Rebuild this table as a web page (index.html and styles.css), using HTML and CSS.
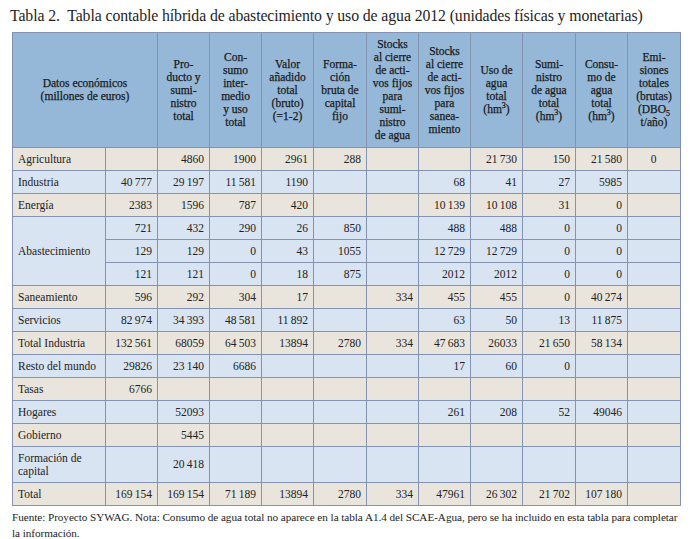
FILE: index.html
```html
<!DOCTYPE html>
<html lang="es">
<head>
<meta charset="utf-8">
<link rel="stylesheet" href="styles.css">
</head>
<body>
<div class="page">
<h1 class="title">Tabla 2.&nbsp; Tabla contable híbrida de abastecimiento y uso de agua 2012 (unidades físicas y monetarias)</h1>
<table class="tbl">
<colgroup>
<col class="c-lab"><col class="c52"><col class="c52"><col class="c52"><col class="c52"><col class="c53"><col class="c52"><col class="c52"><col class="c52"><col class="c53"><col class="c52"><col class="c53">
</colgroup>
<thead>
<tr class="head">
<th colspan="2">Datos económicos<br>(millones de euros)</th>
<th>Pro-<br>ducto y<br>sumi-<br>nistro<br>total</th>
<th>Con-<br>sumo<br>inter-<br>medio<br>y uso<br>total</th>
<th>Valor<br>añadido<br>total<br>(bruto)<br>(=1-2)</th>
<th>Forma-<br>ción<br>bruta de<br>capital<br>fijo</th>
<th>Stocks<br>al cierre<br>de acti-<br>vos fijos<br>para<br>sumi-<br>nistro<br>de agua</th>
<th>Stocks<br>al cierre<br>de acti-<br>vos fijos<br>para<br>sanea-<br>miento</th>
<th>Uso de<br>agua<br>total<br>(hm<sup>3</sup>)</th>
<th>Sumi-<br>nistro<br>de agua<br>total<br>(hm<sup>3</sup>)</th>
<th>Consu-<br>mo de<br>agua<br>total<br>(hm<sup>3</sup>)</th>
<th>Emi-<br>siones<br>totales<br>(brutas)<br>(DBO<sub>5</sub><br>t/año)</th>
</tr>
</thead>
<tbody>
<tr class="beige"><td class="lab">Agricultura</td><td></td><td>4860</td><td>1900</td><td>2961</td><td>288</td><td></td><td></td><td>21&#8201;730</td><td>150</td><td>21&#8201;580</td><td class="ctr">0</td></tr>
<tr class="blue"><td class="lab">Industria</td><td>40&#8201;777</td><td>29&#8201;197</td><td>11&#8201;581</td><td>1190</td><td></td><td></td><td>68</td><td>41</td><td>27</td><td>5985</td><td></td></tr>
<tr class="beige"><td class="lab">Energía</td><td>2383</td><td>1596</td><td>787</td><td>420</td><td></td><td></td><td>10&#8201;139</td><td>10&#8201;108</td><td>31</td><td>0</td><td></td></tr>
<tr class="blue"><td class="lab" rowspan="3">Abastecimiento</td><td>721</td><td>432</td><td>290</td><td>26</td><td>850</td><td></td><td>488</td><td>488</td><td>0</td><td>0</td><td></td></tr>
<tr class="blue"><td>129</td><td>129</td><td>0</td><td>43</td><td>1055</td><td></td><td>12&#8201;729</td><td>12&#8201;729</td><td>0</td><td>0</td><td></td></tr>
<tr class="blue"><td>121</td><td>121</td><td>0</td><td>18</td><td>875</td><td></td><td>2012</td><td>2012</td><td>0</td><td>0</td><td></td></tr>
<tr class="beige"><td class="lab">Saneamiento</td><td>596</td><td>292</td><td>304</td><td>17</td><td></td><td>334</td><td>455</td><td>455</td><td>0</td><td>40&#8201;274</td><td></td></tr>
<tr class="blue"><td class="lab">Servicios</td><td>82&#8201;974</td><td>34&#8201;393</td><td>48&#8201;581</td><td>11&#8201;892</td><td></td><td></td><td>63</td><td>50</td><td>13</td><td>11&#8201;875</td><td></td></tr>
<tr class="beige"><td class="lab">Total Industria</td><td>132&#8201;561</td><td>68059</td><td>64&#8201;503</td><td>13894</td><td>2780</td><td>334</td><td>47&#8201;683</td><td>26033</td><td>21&#8201;650</td><td>58&#8201;134</td><td></td></tr>
<tr class="blue"><td class="lab">Resto del mundo</td><td>29826</td><td>23&#8201;140</td><td>6686</td><td></td><td></td><td></td><td>17</td><td>60</td><td>0</td><td></td><td></td></tr>
<tr class="beige"><td class="lab">Tasas</td><td>6766</td><td></td><td></td><td></td><td></td><td></td><td></td><td></td><td></td><td></td><td></td></tr>
<tr class="blue"><td class="lab">Hogares</td><td></td><td>52093</td><td></td><td></td><td></td><td></td><td>261</td><td>208</td><td>52</td><td>49046</td><td></td></tr>
<tr class="beige"><td class="lab">Gobierno</td><td></td><td>5445</td><td></td><td></td><td></td><td></td><td></td><td></td><td></td><td></td><td></td></tr>
<tr class="blue tall"><td class="lab">Formación de capital</td><td></td><td>20&#8201;418</td><td></td><td></td><td></td><td></td><td></td><td></td><td></td><td></td><td></td></tr>
<tr class="beige"><td class="lab">Total</td><td>169&#8201;154</td><td>169&#8201;154</td><td>71&#8201;189</td><td>13894</td><td>2780</td><td>334</td><td>47961</td><td>26&#8201;302</td><td>21&#8201;702</td><td>107&#8201;180</td><td></td></tr>
</tbody>
</table>
<p class="note">Fuente: Proyecto SYWAG. Nota: Consumo de agua total no aparece en la tabla A1.4 del SCAE-Agua, pero se ha incluido en esta tabla para completar<br>la información.</p>
</div>
</body>
</html>
```

FILE: styles.css
```css
html, body {
  margin: 0;
  padding: 0;
  background: #ffffff;
}

.page {
  padding: 5px 0 0 0;
  font-family: "Liberation Serif", "DejaVu Serif", serif;
  color: #222222;
}

.title {
  margin: 0 0 0 10px;
  font-size: 15.8px;
  font-weight: normal;
  line-height: 21px;
  height: 27px;
  color: #1e1e1e;
  letter-spacing: -0.1px;
}

.tbl {
  margin-left: 12px;
  border-collapse: collapse;
  table-layout: fixed;
  width: 668px;
  font-size: 11.5px;
}

.c-lab { width: 93px; }
.c52 { width: 52px; }
.c53 { width: 53px; }

.tbl th,
.tbl td {
  border: 1px solid #8593b3;
  padding: 0 5px;
}

.head th {
  background: #95b8d8;
  height: 114px;
  font-weight: normal;
  line-height: 13px;
  text-align: center;
  vertical-align: middle;
  color: #1a1a1a;
  padding: 0 2px;
  -webkit-text-stroke: 0.25px #1a1a1a;
}

.head sup,
.head sub {
  font-size: 8px;
  line-height: 0;
}

.tbl td {
  height: 22px;
  text-align: right;
  vertical-align: middle;
  line-height: 13px;
  padding: 0 5px 0 4px;
}

.tbl td.lab {
  text-align: left;
  padding-left: 5px;
}

.tbl td.ctr {
  text-align: center;
}

.beige td { background: #e9e5dc; }
.blue td { background: #d8e4f1; }

.tall td { height: 35px; }

.note {
  margin: 3px 0 0 12px;
  width: 684px;
  font-size: 11.2px;
  letter-spacing: -0.05px;
  line-height: 16px;
  color: #222222;
}
```
